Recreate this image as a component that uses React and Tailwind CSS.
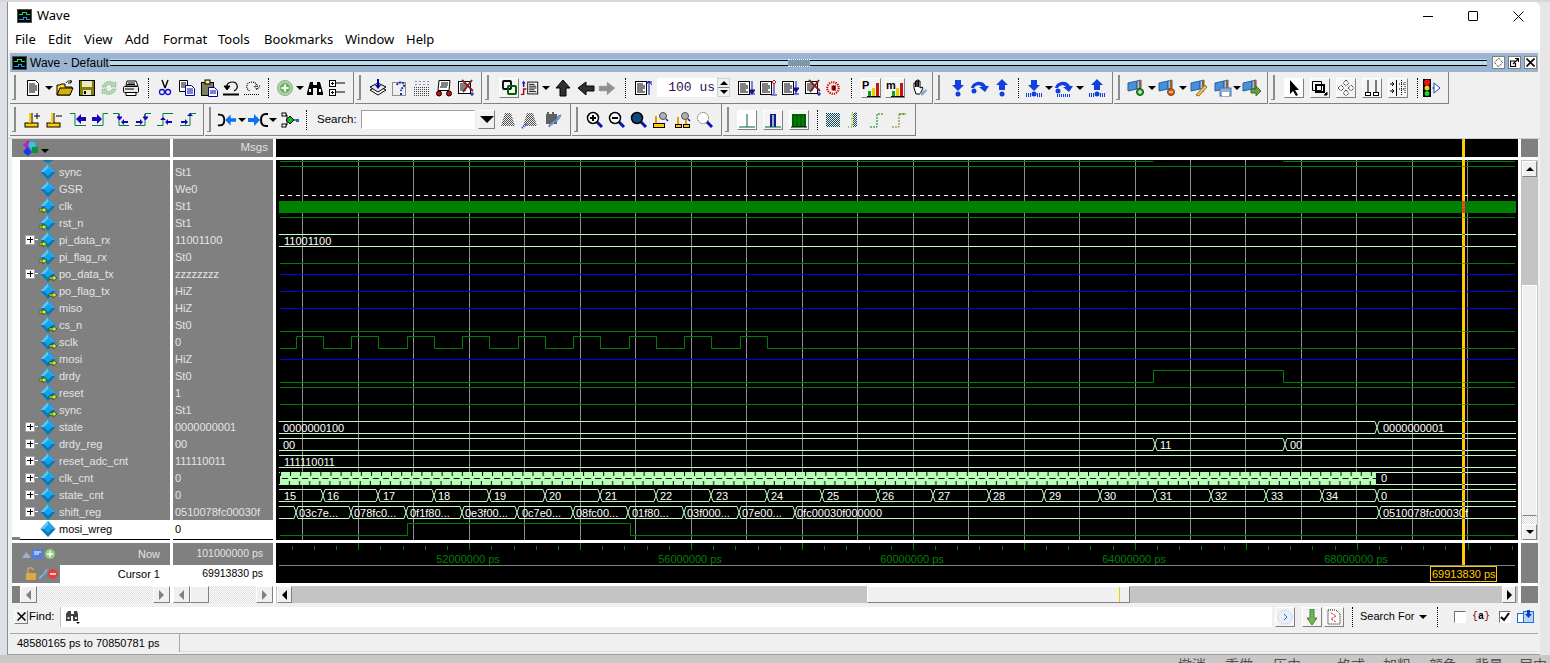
import React from 'react';

// --- small drawing helpers ---
const Svg = ({ w = 18, h = 18, children }) => (
  <svg width={w} height={h} viewBox={`0 0 ${w} ${h}`} className="block">{children}</svg>
);
const K = '#000';

// toolbar cell, keeps the icons on their column
const C = ({ w, children }) => <div className={`${w} h-full flex items-center justify-center shrink-0`}>{children}</div>;
const Caret = () => <div className="w-0 h-0 border-l-[4px] border-r-[4px] border-t-[4px] border-l-transparent border-r-transparent border-t-black" />;
const Sep = () => <div className="h-[20px] border-l border-dotted border-black" />;
const Raised = ({ on, children }) => (
  <div className={`w-[20px] h-[20px] flex items-center justify-center border border-white border-r-[#808080] border-b-[#808080] ${on ? 'bg-white' : 'bg-[#f4f4f4]'}`}>{children}</div>
);

const Group = ({ w, pad, children }) => (
  <div className={`${w} h-full flex items-center ml-px first:ml-0 bg-[#f0f0f0] border-r border-b border-[#808080] shrink-0`}>
    <div className="ml-[2px] w-[4px] h-[25px] border-r-2 border-b border-[#8c8c8c] shrink-0" />
    <div className={`${pad} shrink-0`} />
    {children}
  </div>
);

// --- toolbar icons ---
const Doc = () => <Svg><path d="M3.5 1.5h8l3 3v12h-11z" fill="#fff" stroke={K} /><path d="M5 5h6M5 7h8M5 9h8M5 11h8M5 13h6" stroke={K} /></Svg>;
const Folder = () => <Svg><path d="M1 16V6h3l1-1h4v3h7l-2 8z" fill="#ffd83c" stroke={K} /><path d="M1 16l3-7h13l-3 7z" fill="#d8b000" stroke={K} /><path d="M10 4c1-2 4-3 6-1M15 1v3h-3" fill="none" stroke={K} /></Svg>;
const Save = () => <Svg><rect x="1.5" y="1.5" width="15" height="15" fill="#808000" stroke={K} /><rect x="4" y="2" width="10" height="6" fill="#e8e8c8" /><rect x="5" y="11" width="8" height="5" fill="#e8e8c8" /><rect x="6" y="12" width="2" height="3" fill={K} /></Svg>;
const Sync = () => <Svg><path d="M2 8c1-5 8-7 12-4l2-1v5h-5l1-2c-2-1-5-1-6 2zM16 10c-1 5-8 7-12 4l-2 1v-5h5l-1 2c2 1 5 1 6-2z" fill="#b4d8b4" stroke="#80b480" strokeDasharray="1 1" /></Svg>;
const Print = () => <Svg><path d="M5 2h9l2 5H4z" fill="#fff" stroke={K} /><rect x="1.5" y="7.5" width="15" height="6" rx="1" fill="#e8e8e8" stroke={K} /><path d="M4 13.5h10v3H4z" fill="#fff" stroke={K} /><path d="M6 4h7M5 5.5h8M3 10h9" stroke={K} /></Svg>;
const Cut = () => <Svg><path d="M6 1l3 8M12 1L9 9" stroke={K} strokeWidth="1.4" /><circle cx="6" cy="13" r="2.5" fill="none" stroke="#1010d0" strokeWidth="1.3" /><circle cx="12" cy="13" r="2.5" fill="none" stroke="#1010d0" strokeWidth="1.3" /></Svg>;
const Copy = () => <Svg><path d="M1.5 1.5h8v11h-8z" fill="#fff" stroke={K} /><path d="M3 4h5M3 6h5M3 8h4" stroke={K} /><path d="M7.5 6.5h6l3 3v7h-9z" fill="#fff" stroke="#0000a0" /><path d="M9 10h6M9 12h6M9 14h6" stroke="#0000a0" /></Svg>;
const Paste = () => <Svg><rect x="1.5" y="3.5" width="12" height="13" fill="#808060" stroke={K} /><rect x="5" y="1" width="5" height="4" fill="#ffe080" stroke={K} /><path d="M8.5 8.5h6l3 3v6h-9z" fill="#fff" stroke="#0000a0" /><path d="M10 12h6M10 14h6" stroke="#0000a0" /></Svg>;
const Undo = ({ off }) => (
  <Svg><path d="M5 10V6c2-4 9-4 10 0 1 3-1 5-3 6" fill="none" stroke={K} strokeWidth="1.2" strokeDasharray={off ? '1 1' : undefined} transform={off ? 'matrix(-1 0 0 1 19 0)' : undefined} /><path d="M2 7h6l-3 4z" fill={off ? 'none' : K} stroke={K} strokeDasharray={off ? '1 1' : undefined} transform={off ? 'matrix(-1 0 0 1 19 0)' : undefined} /><path d="M1 15.5h16" stroke={K} strokeWidth={off ? 1 : 2} strokeDasharray={off ? '1 1' : undefined} /></Svg>
);
const AddCircle = () => <Svg><circle cx="9" cy="9" r="7.5" fill="#a8d8a0" stroke="#a0a0a0" /><circle cx="9" cy="9" r="5" fill="#60b860" /><path d="M9 5.5v7M5.5 9h7" stroke="#fff" strokeWidth="2" /></Svg>;
const Binoc = () => <Svg><path d="M4 3h3v3h4V3h3l3 11v2h-6V9H7v7H1v-2z" fill={K} /><rect x="3" y="10" width="2" height="3" fill="#fff" /><rect x="13" y="10" width="2" height="3" fill="#fff" /></Svg>;
const ListBox = () => <Svg><rect x="1.5" y="1.5" width="6" height="6" fill="#fff" stroke={K} /><rect x="1.5" y="10.5" width="6" height="6" fill="#fff" stroke={K} /><path d="M3 4.5h3M4.5 3v3M3 13.5h3M4.5 12v3M8 4h9M8 13h9" stroke={K} /></Svg>;
const Stack = () => <Svg><path d="M1 11l8-4 8 4-8 5z" fill="#fff" stroke={K} /><path d="M1 8l8-4 8 4-8 5z" fill="#e8e8e8" stroke={K} /><path d="M8 0h2v6h2l-3 4-3-4h2z" fill="#0000b0" /></Svg>;
const Question = () => <Svg><rect x="1.5" y="3.5" width="13" height="13" fill="none" stroke="#303030" strokeDasharray="1 1" /><path d="M6 6c1-4 8-3 7 1-1 2-3 2-3 5M10 14v2" fill="none" stroke="#1030b0" strokeWidth="2" strokeDasharray="2 1" /></Svg>;
const Grid = () => <Svg><path d="M1 16.5h16M1 14.5h16M1 12.5h16M1 10.5h16M1 8.5h16" stroke="#404040" strokeDasharray="1 1" /><path d="M3 2v5M7 2v5M11 2v5M15 2v5" stroke="#1030b0" strokeDasharray="1 2" /></Svg>;
const Cart = () => <Svg><path d="M4 1.5h11l-1 10H3z" fill="#fff" stroke={K} /><path d="M6 4h7M6 6h7M5 8h7" stroke={K} /><circle cx="4" cy="14.5" r="2.5" fill="#d01010" stroke={K} /><circle cx="14" cy="14.5" r="2.5" fill="#d01010" stroke={K} /></Svg>;
const XDoc = () => <Svg><rect x="1.5" y="2.5" width="12" height="12" fill="#fff" stroke={K} /><path d="M3 5h6M3 7h7M3 9h7M3 11h6" stroke={K} /><path d="M5 1l11 11M15 1L6 13" stroke="#802020" strokeWidth="1.8" /><path d="M15 13v4M13 15h4" stroke="#0000b0" /></Svg>;
const Chain = () => <svg width="15" height="15" viewBox="0 0 15 15"><rect x="1" y="1" width="8" height="8" rx="1" fill="none" stroke={K} strokeWidth="1.8" /><rect x="6" y="6" width="8" height="8" rx="1" fill="none" stroke="#006000" strokeWidth="2" /></svg>;
const ListIcon = ({ x = 1, children }) => <Svg><rect x={x + 0.5} y="2.5" width="11" height="13" fill="#fff" stroke={K} /><path d={`M${x + 2} 5h6M${x + 2} 7h8M${x + 2} 9h8M${x + 2} 11h6M${x + 2} 13h8`} stroke={K} />{children}</Svg>;
const ListSwap = () => <Svg w={22}><rect x="8.5" y="2.5" width="11" height="13" fill="#fff" stroke={K} /><path d="M10 5h6M10 7h8M10 9h8M10 11h6M10 13h8" stroke={K} /><path d="M4 2v6" stroke="#1010b0" strokeWidth="1.6" /><path d="M2 4l2-3 2 3z" fill="#1010b0" /><path d="M1 16h3v-6h3" fill="none" stroke="#a01010" strokeWidth="1.6" /></Svg>;
const Up = () => <Svg><path d="M9 1l7 8h-4v8H6V9H2z" fill="#303030" stroke={K} /></Svg>;
const Left = () => <Svg><path d="M1 9l8-6v4h8v5H9v4z" fill="#303030" stroke={K} /></Svg>;
const Right = () => <Svg><path d="M17 9L9 3v4H1v5h8v4z" fill="#909090" stroke="#b0b0b0" strokeDasharray="1 1" /></Svg>;
const Hand = () => <Svg><path d="M4 9V4h1.5v4V2H7v6V1h1.500v7V2H10v7l2-1 1 1-3 6H6z" fill="#fff" stroke={K} /><path d="M10 14l6-4 1 2-5 5z" fill="#90a8d0" /></Svg>;
const Bars = ({ letter }) => (
  <svg width="18" height="18" viewBox="0 0 18 18"><text x="0" y="10" fontSize="11" fontWeight="700" fontFamily="Liberation Sans, sans-serif" fill={K}>{letter}</text><rect x="6" y="12" width="3" height="5" fill="#10a010" /><rect x="10" y="9" width="3" height="8" fill="#e8d000" /><rect x="14" y="4" width="3" height="13" fill="#d01010" /><path d="M5 17.500h13" stroke={K} /></svg>
);
const Circ = () => <Svg><circle cx="9" cy="9" r="6.5" fill="none" stroke="#e01010" strokeWidth="2.4" strokeDasharray="1.500 1" /><path d="M12 6.500H8v5h4M7 9h6" stroke="#e01010" strokeWidth="1.5" strokeDasharray="1 1" /></Svg>;

// blue transport arrows
const Dots = ({ y = 16 }) => <path d={`M1 ${y}h1M3 ${y}h1M5 ${y}h1M12 ${y}h1M14 ${y}h1M16 ${y}h1`} stroke="#1040e0" strokeWidth="4" />;
const RunDown = ({ bars }) => <Svg><path d="M6 1h6v5h3l-6 6-6-6h3z" fill="#1040e0" /><circle cx="9" cy="15" r="2.500" fill="#1040e0" />{bars && <Dots />}</Svg>;
const RunUp = ({ bars }) => <Svg><path d="M9 0l6 6h-3v5H6V6H3z" fill="#1040e0" /><circle cx="9" cy="15" r="2.500" fill="#1040e0" />{bars && <Dots />}</Svg>;
const RunOver = ({ bars }) => <Svg w={20}><path d="M1 9c1-7 12-9 15-2h3l-4 6-6-5h3c-2-3-7-2-8 1z" fill="#1040e0" /><circle cx="4" cy="12" r="2.500" fill="#1040e0" />{bars && <path d="M3 16.500h14" stroke="#1040e0" strokeWidth="3" strokeDasharray="1 1" />}</Svg>;

// flag / bookmark icons
const Flag = ({ children }) => <Svg w={20}><path d="M1 4l9-2v8l-9 2z" fill="#4a90d8" stroke="#2060a0" /><path d="M10 2l4-1v8l-4 1z" fill="#a0c8f0" stroke="#2060a0" /><path d="M13 1v12" stroke="#a06020" strokeWidth="2" />{children}</Svg>;

// row 2
const CursorAdd = ({ minus }) => <Svg><rect x="2" y="12" width="13" height="4" fill="#ffcc00" stroke={K} /><path d="M7 2v10" stroke="#ffcc00" strokeWidth="2" /><path d="M9 2v10" stroke={K} /><path d="M11 5h6" stroke={K} />{!minus && <path d="M14 2v6" stroke={K} />}</Svg>;
const P = '#2000c0';
const Edge = ({ d, a }) => <Svg><path d={d} fill="none" stroke="#008040" />{a}</Svg>;
const edges = [
  <Edge d="M1 2.500h5v12h11" a={<path d="M7 8l5-5v3h5v4h-5v3z" fill={P} />} />,
  <Edge d="M1 14.500h11v-12h5" a={<path d="M11 8L6 3v3H1v4h5v3z" fill={P} />} />,
  <Edge d="M1 2.500h6v12h10" a={<><path d="M7 3v3M5 6h5l-2.500 3z" fill={P} stroke={P} /><path d="M9 11l3-3v2h4v2h-4v2z" fill={P} /></>} />,
  <Edge d="M1 14.500h10v-12h6" a={<><path d="M11 3v3M9 6h5l-2.500 3z" fill={P} stroke={P} /><path d="M9 11L6 8v2H2v2h4v2z" fill={P} /></>} />,
  <Edge d="M1 14.500h6v-12h10" a={<><path d="M7 6l-3 3h6z" fill={P} /><path d="M9 11l3-3v2h4v2h-4v2z" fill={P} /></>} />,
  <Edge d="M1 14.500h10v-12h6" a={<><path d="M11 2l-3 3h6z" fill={P} /><path d="M9 11L6 8v2H2v2h4v2z" fill={P} /></>} />,
];
const Merge = ({ out }) => (
  <Svg w={22}>
    <path d={out ? 'M21 3h-2c-4 0-5 3-5 6s1 6 5 6h2' : 'M1 3h2c4 0 5 3 5 6s-1 6-5 6H1'} fill="none" stroke={K} strokeWidth="2" />
    <path d={out ? 'M1 7h6V3l6 6-6 6v-4H1z' : 'M21 7h-6V3L9 9l6 6v-4h6z'} fill="#1070f0" />
  </Svg>
);
const Tree = () => <Svg w={18}><path d="M1 4h5v10H1M6 9h10" fill="none" stroke={K} /><rect x="1" y="2" width="4" height="3" fill="#fff" stroke={K} /><rect x="1" y="13" width="4" height="3" fill="#fff" stroke={K} /><path d="M9 5l4 4-4 4-4-4z" fill="#10c020" stroke={K} /><rect x="15" y="8" width="3" height="3" fill="#2060e0" /></Svg>;
const DithBin = ({ blue }) => <Svg><path d="M6 2h6l4 13H2z" fill="url(#dith)" />{blue && <path d="M1 17l5-4" stroke="#1030e0" strokeDasharray="1 1" strokeWidth="2" />}</Svg>;
const Wrench = () => <Svg><rect x="2" y="3" width="11" height="10" fill="#606060" /><path d="M4 1v2M9 1v2" stroke="#606060" strokeWidth="2" /><path d="M5 16l10-8 2-4-3 1-1 3-8 6z" fill="#90b0e0" stroke="#6080c0" /></Svg>;
const Mag = ({ kind, off }) => {
  const s = off ? '#404040' : K;
  return (
    <Svg>
      <path d="M10 10l6 6" stroke="#1010b0" strokeWidth="3" />
      <circle cx="7" cy="7" r="5.500" fill={kind === 'fill' ? '#104880' : '#fff'} stroke={s} strokeWidth={off ? 1 : 1.500} strokeDasharray={off ? '1 1' : undefined} />
      {kind === 'plus' && <path d="M4 7h6M7 4v6" stroke={K} strokeWidth="2" />}
      {kind === 'minus' && <path d="M4 7h6" stroke={K} strokeWidth="2" />}
    </Svg>
  );
};
const CursorMag = ({ two }) => (
  <Svg>
    {two ? <><rect x="1.500" y="13.500" width="6" height="3" fill="#ffcc00" stroke={K} /><rect x="9.500" y="13.500" width="6" height="3" fill="#ffcc00" stroke={K} /><path d="M4 6v7M12 8v5" stroke="#e0a000" strokeWidth="2" /></> : <><rect x="1.500" y="12.500" width="11" height="4" fill="#ffcc00" stroke={K} /><path d="M4 5v7" stroke="#e0a000" strokeWidth="2" /></>}
    <circle cx="11" cy="5" r="3.500" fill="#b0b0b0" stroke="#505050" />
    <path d="M14 8l2 2" stroke="#1010e0" strokeWidth="1.500" />
  </Svg>
);
const Pulse = ({ kind }) => (
  <svg width="16" height="16" viewBox="0 0 16 16">
    {kind === 0 && <path d="M0 15h16M8 2v13" stroke="#006030" />}
    {kind === 1 && <><rect x="5" y="2" width="6" height="13" fill="#10208a" /><rect x="7" y="3" width="2" height="12" fill="#a0a8e0" /><path d="M0 15h16" stroke="#006030" /></>}
    {kind === 2 && <><rect x="1" y="2" width="14" height="13" fill="#006000" /><path d="M4 4v11M8 4v11M12 4v11" stroke="#00a000" /><path d="M0 15h16" stroke={K} /></>}
  </svg>
);
const DotEdge = ({ kind }) => (
  <Svg>
    {kind === 0 && <rect x="2" y="2" width="14" height="14" fill="url(#dithb)" />}
    {kind === 1 && <><path d="M2 16h4V2h6" fill="none" stroke="#00a000" strokeDasharray="1 2" /><path d="M6 2v14" stroke="#e8d000" strokeDasharray="1 1" /><rect x="7" y="2" width="4" height="14" fill="url(#dithb)" /></>}
    {kind === 2 && <path d="M2 16h7V3h7" fill="none" stroke="#008000" strokeDasharray="2 1" />}
    {kind === 3 && <><path d="M2 16h7V3h7" fill="none" stroke="#808000" strokeDasharray="2 1" /><path d="M9 3h7" stroke="#00a000" strokeDasharray="2 1" /></>}
  </Svg>
);

const Arrow = () => <Svg><path d="M5 1v14l3-3 3 5 2-1-3-5h4z" fill={K} /></Svg>;
const ZoomBox = () => <Svg><path d="M1.500 2.500h9v9h-9z" fill="none" stroke={K} /><rect x="5" y="6" width="8" height="7" fill="none" stroke={K} strokeWidth="2" /><path d="M12 12l4 4M13 16h3v-3" stroke={K} /></Svg>;
const Move = () => <Svg><path d="M9 1l3 3-3 3-3-3zM9 11l3 3-3 3-3-3zM1 9l3-3 3 3-3 3zM11 9l3-3 3 3-3 3z" fill="none" stroke={K} strokeDasharray="1 1" /></Svg>;
const Ruler = () => <Svg><path d="M5 1v13M13 1v13" stroke={K} /><rect x="2.500" y="13.500" width="5" height="3" fill="#fff" stroke={K} /><rect x="10.500" y="13.500" width="5" height="3" fill="#fff" stroke={K} /></Svg>;
const Dotted = () => <Svg><path d="M7.500 1v16M1 5h4M3 3l2 2-2 2M1 12h4M3 10l2 2-2 2" fill="none" stroke={K} /><path d="M12.500 1v16M16 3v12M10 5h6M10 10h6" stroke={K} strokeDasharray="1 1" fill="none" /></Svg>;
const Traffic = () => (
  <Svg w={18}>
    <rect x="0" y="0" width="8" height="18" fill={K} />
    <circle cx="4" cy="3.500" r="3" fill="#f01010" /><circle cx="4" cy="9" r="2.500" fill="#f0d020" /><circle cx="4" cy="14.500" r="2.500" fill="#20d040" />
    <path d="M9 9h2M11 4v10l6-5z" fill="#fff" stroke="#2040a0" />
  </Svg>
);

const AppIcon = () => (
  <svg width="15" height="14" viewBox="0 0 15 14" className="block" shapeRendering="crispEdges">
    <rect x="0" y="0" width="15" height="14" fill="#505050" />
    <rect x="1" y="1" width="13" height="12" fill="#000" />
    <path d="M2 5.500h3V3.500h4v2h4" fill="none" stroke="#10e060" />
    <path d="M2 10.500h4V8.500h3v2h4" fill="none" stroke="#10a0f0" />
  </svg>
);

// --- signal tree ---
const signals = [
  ['sync', 'St1', ''], ['GSR', 'We0', ''], ['clk', 'St1', 'in'], ['rst_n', 'St1', 'in'],
  ['pi_data_rx', '11001100', 'in', 1], ['pi_flag_rx', 'St0', 'in'],
  ['po_data_tx', 'zzzzzzzz', 'out', 1], ['po_flag_tx', 'HiZ', 'out'], ['miso', 'HiZ', 'in'],
  ['cs_n', 'St0', 'out'], ['sclk', '0', 'out'], ['mosi', 'HiZ', 'out'], ['drdy', 'St0', 'in'],
  ['reset', '1', 'out'], ['sync', 'St1', 'out'], ['state', '0000000001', '', 1],
  ['drdy_reg', '00', '', 1], ['reset_adc_cnt', '111110011', '', 1], ['clk_cnt', '0', '', 1],
  ['state_cnt', '0', '', 1], ['shift_reg', '0510078fc00030f', '', 1], ['mosi_wreg', '0', '', 0, 1],
];

const Diamond = ({ dir }) => (
  <svg width="18" height="16" viewBox="0 0 18 16" className="block shrink-0">
    <path d="M9 0l7.500 8L9 16 1.500 8z" fill="#0878b8" />
    <path d="M9 0L1.500 8 9 8z" fill="#58c8f8" />
    <path d="M9 0l7.500 8L9 8z" fill="#28a8e8" />
    <path d="M9 4l4 4-4 4-4-4z" fill="#18a0e8" />
    {dir === 'in' && <path d="M0 11h4V9l4 3-4 3v-2H0z" fill="#c8f020" stroke="#103010" strokeWidth="0.6" />}
    {dir === 'out' && <path d="M10 11h4V9l4 3-4 3v-2h-4z" fill="#c8f020" stroke="#103010" strokeWidth="0.6" />}
  </svg>
);

const SignalName = ({ s }) => {
  const [name, , dir, bus, sel] = s;
  return (
    <div className="h-[17px] flex items-center">
      <div className="w-[8px] h-full shrink-0 bg-white" />
      <div className={`flex-1 h-full flex items-center ${sel ? 'bg-white text-black' : 'bg-[#808080] text-[#e4e4e4]'}`}>
        <div className="w-[15px] flex items-center justify-end shrink-0">
          {bus ? (
            <div className="w-[10px] h-[10px] bg-white border border-[#a0a0b0] flex items-center justify-center relative">
              <div className="w-[6px] h-px bg-black" />
              <div className="absolute w-px h-[6px] bg-black" />
            </div>
          ) : null}
        </div>
        <div className={`w-[3px] h-px shrink-0 ${bus ? 'bg-white' : ''}`} />
        <div className="w-[20px] flex justify-center shrink-0"><Diamond dir={dir} /></div>
        <span className="ml-[1px] pt-px text-[11px] leading-none">{name}</span>
      </div>
    </div>
  );
};

const SignalValue = ({ s }) => (
  <div className={`h-[17px] flex items-center pl-[2px] pt-px text-[11px] leading-none ${s[4] ? 'bg-white text-black' : 'text-[#e4e4e4]'}`}>{s[1]}</div>
);

// --- wave panel, drawn as svg ---
const X0 = 279;
const X1 = 1516;
const gridXs = Array.from({ length: 22 }, (_, i) => Math.round(302.3 + i * 55.48) + 0.5);
const greenLines = [166.5, 217.5, 263.5, 331.5, 387.5, 404.5];
const blueLines = [274.5, 291.5, 308.5, 359.5];

const sclkPath = () => {
  const rises = [296, 351, 407, 462, 518, 573, 629, 684, 740];
  let d = `M${X0 + 1} 348.500`;
  rises.forEach((r) => {
    d += ` H${r}.5 V336.500 H${r + 27}.5 V348.500`;
  });
  return `${d} H${X1 - 1}`;
};

// hexagon-shaped bus segments between the transitions
const busPath = (y, xs) => {
  const top = y + 0.5;
  const bot = y + 12.5;
  const mid = y + 6.5;
  const stops = [X0, ...xs, X1];
  let d = '';
  for (let i = 0; i < stops.length - 1; i++) {
    const a = stops[i];
    const b = stops[i + 1];
    const l = i === 0 ? `M${a} ${top}` : `M${a} ${mid} L${a + 2} ${top}`;
    const l2 = i === 0 ? `M${a} ${bot}` : `M${a} ${mid} L${a + 2} ${bot}`;
    const r = i === stops.length - 2 ? `H${b}` : `H${b - 2} L${b} ${mid}`;
    d += `${l} ${r} ${l2} ${r} `;
  }
  return d;
};

const stateCntXs = Array.from({ length: 20 }, (_, i) => Math.round(322.7 + i * 55.5));
const shiftXs = [296, 351, 406, 462, 517, 573, 628, 684, 739, 795, 1379];
const buses = [
  { y: 234, xs: [], labels: [[284, '11001100']] },
  { y: 421, xs: [1377], labels: [[283, '0000000100'], [1383, '0000000001']] },
  { y: 438, xs: [1155, 1285], labels: [[283, '00'], [1160, '11'], [1290, '00']] },
  { y: 455, xs: [], labels: [[284, '111110011']] },
  {
    y: 489,
    xs: stateCntXs,
    labels: [[284, '15'], ...Array.from({ length: 19 }, (_, i) => [Math.round(327 + i * 55.5), String(16 + i)]), [1381, '0']],
  },
  {
    y: 506,
    xs: shiftXs,
    labels: [
      [299, '03c7e...'], [354, '078fc0...'], [410, '0f1f80...'], [465, '0e3f00...'], [522, '0c7e0...'],
      [576, '08fc00...'], [632, '01f80...'], [687, '03f000...'], [742, '07e00...'], [797, '0fc00030f000000'], [1383, '0510078fc00030f'],
    ],
  },
];
const crossRed = [166, 204, 207, 217, 263, 331, 348, 382, 387, 404];
const crossBlue = [234, 246, 421, 433, 438, 450, 455, 467, 472, 484, 489, 501, 506, 518];

const WaveBody = () => (
  <svg width="1242" height="380" viewBox="276 160 1242 380" className="block bg-black" fontFamily="Liberation Sans, sans-serif" fontSize="11">
    <defs>
      {/* clk_cnt counts too fast to read, the cells repeat every 10px */}
      <pattern id="clkcnt" x="280" y="472" width="10.100" height="13" patternUnits="userSpaceOnUse">
        <rect width="10.100" height="13" fill="#b4ffb4" />
        <path d="M2 6.500h6" stroke={K} />
        <path d="M0.500 0v4M9.500 9v4" stroke={K} />
      </pattern>
    </defs>
    {gridXs.map((x) => <path key={x} d={`M${x} 160V540`} stroke="#8c8c8c" />)}
    <path d={`M${X0 + 1} 161.500H1153.500M1283 161.500H${X1 - 1}`} stroke="#008000" />
    {greenLines.map((y) => <path key={y} d={`M${X0 + 1} ${y}H${X1 - 1}`} stroke="#008000" />)}
    {blueLines.map((y) => <path key={y} d={`M${X0 + 1} ${y}H${X1 - 1}`} stroke="#0000f0" />)}
    <path d={`M${X0 + 1} 195.500H${X1 - 1}`} stroke="#fff" strokeDasharray="4 4" />
    <rect x={X0} y="201" width={X1 - X0} height="12" fill="#008000" />
    <path d={sclkPath()} fill="none" stroke="#008000" />
    <path d={`M${X0 + 1} 382.500H1153.500V370.500H1283.500V382.500H${X1 - 1}`} fill="none" stroke="#008000" />
    <path d={`M${X0 + 1} 535.500H407.500V523.500H630.500V535.500H${X1 - 1}`} fill="none" stroke="#008000" />
    {buses.map((b) => <path key={b.y} d={busPath(b.y, b.xs)} fill="none" stroke="#c0ffc0" />)}
    <path d={`M${X0} 472.500H${X1}M${X0} 484.500H${X1}`} stroke="#c0ffc0" />
    <rect x="280" y="472" width="1096" height="13" fill="url(#clkcnt)" />
    <rect x="1376" y="473" width="60" height="11" fill={K} />
    {gridXs.filter((x) => x > 1376).map((x) => <path key={x} d={`M${x} 473V484`} stroke="#8c8c8c" />)}
    {buses.map((b) => b.labels.map(([x, t]) => <text key={x + t} x={x} y={b.y + 11} fill="#fff">{t}</text>))}
    <text x="1381" y="482" fill="#fff">0</text>
    <rect x="1462" y="160" width="3" height="380" fill="#ffcc00" />
    <rect x="1462" y="201" width="3" height="12" fill="#e84020" />
    {crossRed.map((y) => <rect key={y} x="1462" y={y} width="3" height="1" fill="#e06020" />)}
    {crossBlue.map((y) => <rect key={y} x="1462" y={y} width="3" height="1" fill="#5060d0" />)}
  </svg>
);

const Ruler2 = () => (
  <svg width="1242" height="40" viewBox="276 543 1242 40" className="block bg-black" fontFamily="Liberation Sans, sans-serif" fontSize="11">
    {Array.from({ length: 56 }, (_, i) => {
      const x = Math.round(291.6 + i * 22.19) + 0.5;
      const major = (i - 3) % 5 === 0;
      return <path key={i} d={`M${x} ${major ? 543 : 546}V550`} stroke="#008000" />;
    })}
    {[[468, '52000000 ps'], [690, '56000000 ps'], [912, '60000000 ps'], [1134, '64000000 ps'], [1356, '68000000 ps']].map(([x, t]) => (
      <text key={t} x={x} y="563" fill="#008000" textAnchor="middle">{t}</text>
    ))}
    <path d={`M${X0} 565.500H${X1 - 1}`} stroke="#808080" />
    <rect x="1462" y="543" width="3" height="22" fill="#ffcc00" />
    <rect x="1430.500" y="566.500" width="66" height="15" fill="none" stroke="#ffcc00" />
    <text x="1432" y="578" fill="#ffcc00">69913830 ps</text>
  </svg>
);

const Btn = ({ children, w = 'w-[17px]' }) => (
  <div className={`${w} h-full shrink-0 flex items-center justify-center bg-[#f0f0f0] border border-white border-r-[#808080] border-b-[#808080]`}>{children}</div>
);
const TriL = ({ c = 'border-r-black' }) => <div className={`w-0 h-0 border-y-[5px] border-r-[5px] border-y-transparent ${c}`} />;
const TriR = ({ c = 'border-l-black' }) => <div className={`w-0 h-0 border-y-[5px] border-l-[5px] border-y-transparent ${c}`} />;
const dither = 'bg-[repeating-conic-gradient(#ffffff_0_25%,#dcdcdc_0_50%)] bg-[length:2px_2px]';

const Check = ({ on }) => (
  <div className="w-[12px] h-[12px] bg-white border border-[#707070] border-r-white border-b-white flex items-center justify-center">
    {on && <svg width="10" height="10" viewBox="0 0 10 10"><path d="M1 5l3 3 5-7" fill="none" stroke={K} strokeWidth="2" /></svg>}
  </div>
);

export default function App() {
  return (
    <div className="w-[1550px] h-[663px] overflow-hidden flex flex-col bg-[#e4e4e4] text-black font-['Liberation_Sans',sans-serif]">
      <svg className="absolute w-0 h-0">
        <defs>
          <pattern id="dith" width="2" height="2" patternUnits="userSpaceOnUse"><rect width="1" height="1" fill="#505050" /><rect x="1" y="1" width="1" height="1" fill="#505050" /></pattern>
          <pattern id="dithb" width="2" height="2" patternUnits="userSpaceOnUse"><rect width="1" height="1" fill="#103080" /><rect x="1" y="1" width="1" height="1" fill="#106040" /></pattern>
        </defs>
      </svg>
      <div className="h-[2px] bg-[#d8d8dc] shrink-0" />

      <div className="flex h-[653px] shrink-0">
        <div className="w-[8px] bg-[#dde1e6] border-r border-[#8a8f96] shrink-0" />

        <div className="w-[1532px] h-full bg-[#f0f0f0] flex flex-col rounded-tr-[6px] overflow-hidden shrink-0">
          {/* window title */}
          <div className="h-[28px] bg-white flex items-center shrink-0 font-['Noto_Sans',sans-serif]">
            <div className="ml-[9px]"><AppIcon /></div>
            <span className="ml-[5px] text-[13px]">Wave</span>
            <div className="ml-auto flex items-center mr-[16px] gap-[35px]">
              <div className="w-[10px] h-px bg-black" />
              <div className="w-[10px] h-[10px] border border-black rounded-[1px]" />
              <svg width="11" height="11" viewBox="0 0 11 11"><path d="M0.500 0.500l10 10M10.500 0.500l-10 10" stroke={K} /></svg>
            </div>
          </div>
          {/* menu */}
          <div className="h-[20px] bg-white flex items-center pl-[7px] text-[13px] shrink-0 font-['Noto_Sans',sans-serif]">
            <div className="w-[33px]">File</div>
            <div className="w-[36px]">Edit</div>
            <div className="w-[41px]">View</div>
            <div className="w-[38px]">Add</div>
            <div className="w-[55px]">Format</div>
            <div className="w-[46px]">Tools</div>
            <div className="w-[81px]">Bookmarks</div>
            <div className="w-[61px]">Window</div>
            <div>Help</div>
          </div>
          <div className="h-[3px] shrink-0 bg-[#f0f0f0]" />

          {/* sub window title */}
          <div className="h-[19px] mx-[2px] bg-[#9ab5d1] flex items-center shrink-0">
            <div className="ml-[2px]"><AppIcon /></div>
            <span className="ml-[3px] text-[12px] w-[80px] whitespace-nowrap shrink-0">Wave - Default</span>
            <div className="flex-1 h-[8px] flex items-center">
              <div className="flex-1 h-[7px] border-b border-black bg-[#bcdcec]"><div className="h-[2px] border-b border-black" /></div>
              <div className="w-[22px] h-[8px] bg-[#7f97ad] border-y border-dotted border-white" />
              <div className="flex-1 h-[7px] border-b border-black bg-[#bcdcec]"><div className="h-[2px] border-b border-black" /></div>
            </div>
            <div className="ml-[5px] flex gap-[3px] mr-[1px]">
              <div className="w-[13px] h-[13px] bg-white border border-[#808080] flex items-center justify-center"><svg width="9" height="9" viewBox="0 0 9 9"><path d="M4.500 0l4 4.500-4 4.500-4-4.500z" fill="none" stroke={K} strokeDasharray="1 1" /></svg></div>
              <div className="w-[13px] h-[13px] bg-white border border-[#808080] flex items-center justify-center"><svg width="9" height="9" viewBox="0 0 9 9"><path d="M0 3h5M0.500 3v5.500h5V5M3 6l5-5M5 0.500h3.500V4" fill="none" stroke={K} strokeWidth="1.200" /></svg></div>
              <div className="w-[13px] h-[13px] bg-white border border-[#808080] flex items-center justify-center"><svg width="9" height="9" viewBox="0 0 9 9"><path d="M0.500 0.500l8 8M8.500 0.500l-8 8" stroke={K} strokeWidth="1.600" /></svg></div>
            </div>
          </div>

          {/* toolbar row 1 */}
          <div className="h-[32px] ml-[2px] flex shrink-0">
            <Group w="w-[344px]" pad="w-[6px]">
              <C w="w-[22px]"><Doc /></C><C w="w-[10px]"><Caret /></C><C w="w-[22px]"><Folder /></C><C w="w-[22px]"><Save /></C><C w="w-[22px]"><Sync /></C><C w="w-[22px]"><Print /></C>
              <C w="w-[12px]"><Sep /></C><C w="w-[22px]"><Cut /></C><C w="w-[22px]"><Copy /></C><C w="w-[22px]"><Paste /></C><C w="w-[22px]"><Undo /></C><C w="w-[20px]"><Undo off /></C>
              <C w="w-[12px]"><Sep /></C><C w="w-[22px]"><AddCircle /></C><C w="w-[8px]"><Caret /></C><C w="w-[22px]"><Binoc /></C><C w="w-[22px]"><ListBox /></C>
            </Group>
            <Group w="w-[127px]" pad="w-[6px]">
              <C w="w-[22px]"><Stack /></C><C w="w-[22px]"><Question /></C><C w="w-[22px]"><Grid /></C><C w="w-[22px]"><Cart /></C><C w="w-[22px]"><XDoc /></C>
            </Group>
            <Group w="w-[450px]" pad="w-[9px]">
              <C w="w-[22px]"><Raised><Chain /></Raised></C><C w="w-[20px]"><ListSwap /></C><C w="w-[12px]"><Caret /></C><C w="w-[22px]"><Up /></C><C w="w-[24px]"><Left /></C><C w="w-[18px]"><Right /></C>
              <C w="w-[18px]"><Sep /></C>
              <C w="w-[18px]"><ListIcon><path d="M15 3v13M12 6l3-4 3 4M12 3h6" fill="none" stroke="#1010a0" /></ListIcon></C>
              <div className="w-[5px] shrink-0" />
              <div className="w-[60px] h-[19px] bg-white flex items-center justify-end pr-[2px] shrink-0 text-[13px] font-['Liberation_Mono',monospace] text-[#301050]">100 us</div>
              <div className="w-[13px] h-[19px] flex flex-col shrink-0 border border-[#d0d0d0]">
                <div className="flex-1 flex items-center justify-center"><div className="w-0 h-0 border-x-[4px] border-b-[4px] border-x-transparent border-b-black" /></div>
                <div className="h-px bg-[#808080]" />
                <div className="flex-1 flex items-center justify-center"><Caret /></div>
              </div>
              <div className="w-[5px] shrink-0" />
              <C w="w-[22px]"><ListIcon><path d="M15 2v13M12 15h6M12 11l3 4 3-4z" fill="#1010a0" stroke="#1010a0" /></ListIcon></C>
              <C w="w-[22px]"><ListIcon><path d="M15 5v10M12 16h6" stroke="#1010a0" /><path d="M15 1l2 2-2 2-2-2z" fill="none" stroke="#d01010" /></ListIcon></C>
              <C w="w-[22px]"><ListIcon><path d="M15 2v13M12 15h6M12 9l3 4 3-4z" fill="#1010a0" stroke="#1010a0" /></ListIcon></C>
              <C w="w-[24px]"><XDoc /></C><C w="w-[16px]"><Circ /></C><C w="w-[20px]"><Sep /></C>
              <C w="w-[20px]"><Raised><Bars letter="P" /></Raised></C><C w="w-[28px]"><Raised><Bars letter="m" /></Raised></C><C w="w-[20px]"><Hand /></C>
            </Group>
            <Group w="w-[179px]" pad="w-[7px]">
              <C w="w-[22px]"><RunDown /></C><C w="w-[22px]"><RunOver /></C><C w="w-[22px]"><RunUp /></C><C w="w-[10px]"><Sep /></C>
              <C w="w-[22px]"><RunDown bars /></C><C w="w-[8px]"><Caret /></C><C w="w-[22px]"><RunOver bars /></C><C w="w-[10px]"><Caret /></C><C w="w-[24px]"><RunUp bars /></C>
            </Group>
            <Group w="w-[154px]" pad="w-[6px]">
              <C w="w-[22px]"><Flag><circle cx="13" cy="13" r="3.500" fill="#30a030" stroke="#105010" /><path d="M11 13h4M13 11v4" stroke="#fff" /></Flag></C><C w="w-[8px]"><Caret /></C>
              <C w="w-[24px]"><Flag><circle cx="13" cy="13" r="3.500" fill="#d06010" stroke="#804010" /><path d="M11 13h4" stroke="#fff" /></Flag></C><C w="w-[6px]"><Caret /></C>
              <C w="w-[28px]"><Flag><path d="M6 16l9-10 2 2-8 9z" fill="#e8c060" stroke="#a07020" /></Flag></C>
              <C w="w-[20px]"><Flag><rect x="6" y="9" width="11" height="8" fill="#90b0e0" stroke="#5070a0" /><rect x="8" y="13" width="7" height="4" fill="#fff" /></Flag></C><C w="w-[6px]"><Caret /></C>
              <C w="w-[24px]"><Flag><path d="M9 10h5V7l5 5-5 5v-3H9z" fill="#60a040" stroke="#407020" /></Flag></C>
            </Group>
            <Group w="w-[180px]" pad="w-[6px]">
              <C w="w-[26px]"><Raised on><Arrow /></Raised></C><C w="w-[26px]"><Raised><ZoomBox /></Raised></C><C w="w-[26px]"><Raised><Move /></Raised></C><C w="w-[26px]"><Raised><Ruler /></Raised></C><C w="w-[26px]"><Raised><Dotted /></Raised></C>
              <C w="w-[12px]"><Sep /></C><C w="w-[18px]"><Traffic /></C>
            </Group>
          </div>

          {/* toolbar row 2 */}
          <div className="h-[32px] ml-[2px] flex shrink-0">
            <Group w="w-[194px]" pad="w-[5px]">
              <C w="w-[22px]"><CursorAdd /></C><C w="w-[22px]"><CursorAdd minus /></C>
              <C w="w-[26px]">{edges[0]}</C><C w="w-[18px]">{edges[1]}</C><C w="w-[24px]">{edges[2]}</C><C w="w-[20px]">{edges[3]}</C><C w="w-[24px]">{edges[4]}</C><C w="w-[22px]">{edges[5]}</C>
            </Group>
            <Group w="w-[366px]" pad="w-[6px]">
              <C w="w-[20px]"><Merge /></C><C w="w-[10px]"><Caret /></C><C w="w-[22px]"><Merge out /></C><C w="w-[8px]"><Caret /></C><C w="w-[26px]"><Tree /></C><C w="w-[6px]"><Sep /></C>
              <div className="ml-[8px] w-[44px] text-[11.500px] shrink-0">Search:</div>
              <div className="w-[114px] h-[19px] bg-white border border-[#a0a0a0] border-r-white border-b-white shrink-0" />
              <div className="ml-[3px] w-[17px] h-[19px] bg-[#f0f0f0] border border-white border-r-[#808080] border-b-[#808080] flex items-center justify-center shrink-0">
                <div className="w-0 h-0 border-x-[7px] border-t-[7px] border-x-transparent border-t-black" />
              </div>
              <C w="w-[26px]"><DithBin /></C><C w="w-[18px]"><DithBin blue /></C><C w="w-[28px]"><Wrench /></C>
            </Group>
            <Group w="w-[150px]" pad="w-[6px]">
              <C w="w-[22px]"><Mag kind="plus" /></C><C w="w-[22px]"><Mag kind="minus" /></C><C w="w-[22px]"><Mag kind="fill" /></C><C w="w-[22px]"><CursorMag /></C><C w="w-[22px]"><CursorMag two /></C><C w="w-[22px]"><Mag kind="off" off /></C>
            </Group>
            <Group w="w-[193px]" pad="w-[5px]">
              <C w="w-[26px]"><Raised on><Pulse kind={0} /></Raised></C><C w="w-[26px]"><Raised><Pulse kind={1} /></Raised></C><C w="w-[26px]"><Raised><Pulse kind={2} /></Raised></C>
              <C w="w-[10px]"><Sep /></C><C w="w-[22px]"><DotEdge kind={0} /></C><C w="w-[22px]"><DotEdge kind={1} /></C><C w="w-[22px]"><DotEdge kind={2} /></C><C w="w-[22px]"><DotEdge kind={3} /></C>
            </Group>
          </div>

          <div className="h-[3px] shrink-0 border-b border-[#d0d0d0]" />

          {/* panes */}
          <div className="ml-[4px] w-[1526px] grid grid-cols-[158px_100px_1242px_17px] grid-rows-[18px_380px_40px_17px] gap-x-[3px] gap-y-[3px] bg-white shrink-0 text-[11px]">
            {/* header row */}
            <div className="bg-[#808080] flex items-center pl-[9px]">
              <svg width="18" height="16" viewBox="0 0 18 16"><path d="M7 0l5 5-5 5-5-5z" fill="#c020c0" /><path d="M6 7l5 5-4 4-5-4z" fill="#1040e0" /><circle cx="11" cy="5" r="3.500" fill="#20d0e0" /><rect x="11" y="7" width="6" height="6" fill="#109040" /></svg>
              <div className="ml-[2px] mt-[5px]"><Caret /></div>
            </div>
            <div className="bg-[#808080] flex items-center justify-end pr-[5px] text-[#e0e0e0] text-[11.500px]">Msgs</div>
            <svg width="1242" height="18" viewBox="276 139 1242 18" className="block bg-black"><rect x="1462" y="139" width="3" height="18" fill="#ffcc00" /></svg>
            <div className="bg-[#808080]" />

            {/* signal list */}
            <div className="bg-[#808080] overflow-hidden flex flex-col">
              <div className="h-[3px] flex shrink-0 overflow-hidden bg-[#808080]">
                <div className="w-[8px] bg-white" />
                <div className="ml-[21px]"><svg width="14" height="3" viewBox="0 0 14 3"><path d="M1 0h12L7 3z" fill="#0878b8" /></svg></div>
              </div>
              {signals.map((s, i) => <SignalName key={i} s={s} />)}
              <div className="h-[3px] shrink-0 bg-white border-b border-black ml-[8px]" />
            </div>
            <div className="bg-[#808080] overflow-hidden flex flex-col">
              <div className="h-[3px] shrink-0" />
              {signals.map((s, i) => <SignalValue key={i} s={s} />)}
              <div className="h-[3px] shrink-0 bg-white border-b border-black" />
            </div>
            <WaveBody />
            <div className="flex flex-col bg-[#c4c4c4] px-[1px]">
              <div className="h-[16px] mt-[1px]"><Btn w="w-full"><div className="w-0 h-0 border-x-[4px] border-b-[4px] border-x-transparent border-b-black" /></Btn></div>
              <div className="h-[108px]" />
              <div className="flex-1 bg-[#f0f0f0] border border-white border-b-[#808080]" />
              <div className={`h-[8px] ${dither}`} />
              <div className="h-[16px]"><Btn w="w-full"><Caret /></Btn></div>
            </div>

            {/* now and cursor rows */}
            <div className="flex flex-col">
              <div className="h-[22px] bg-[#808080] flex items-center pl-[9px] pr-[10px] text-[#e4e4e4]">
                <svg width="36" height="12" viewBox="0 0 36 12"><path d="M1 10l4-6 4 4v2z" fill="#a0b0d0" /><rect x="11" y="1" width="11" height="10" fill="#5080d8" /><path d="M13 4h7M13 6h5" stroke="#fff" /><circle cx="29" cy="6" r="5" fill="#90d080" /><path d="M26 6h6M29 3v6" stroke="#fff" strokeWidth="1.500" /></svg>
                <span className="ml-auto">Now</span>
              </div>
              <div className="h-[18px] flex">
                <div className="w-[48px] bg-[#808080] flex items-center justify-end pr-[1px]">
                  <svg width="36" height="14" viewBox="0 0 36 14"><path d="M5 6V3c0-3 5-3 5 0" fill="none" stroke="#d0a060" strokeWidth="1.500" /><rect x="3" y="6" width="10" height="7" fill="#e0a840" /><path d="M17 12l6-6 2-4-3 1-1 3-6 5z" fill="#80b0e8" /><circle cx="30" cy="7" r="5" fill="#e04040" /><path d="M27 7h6" stroke="#fff" strokeWidth="1.500" /></svg>
                </div>
                <div className="flex-1 bg-white flex items-center justify-end pr-[10px] text-black">Cursor 1</div>
              </div>
            </div>
            <div className="flex flex-col text-[10.500px]">
              <div className="h-[22px] bg-[#808080] text-[#e4e4e4] flex items-center justify-end pr-[10px]">101000000 ps</div>
              <div className="h-[18px] bg-white flex items-center justify-end pr-[10px] text-black">69913830 ps</div>
            </div>
            <Ruler2 />
            <div className="bg-[#808080]" />

            {/* scrollbars */}
            <div className="bg-[#808080] flex pl-[8px]">
              <Btn><TriL c="border-r-[#808080]" /></Btn><div className={`flex-1 ${dither}`} /><Btn><TriR c="border-l-[#808080]" /></Btn>
            </div>
            <div className="bg-[#808080] flex">
              <Btn><TriL c="border-r-[#808080]" /></Btn><Btn w="w-[19px]" /><div className={`flex-1 ${dither}`} /><Btn><TriR c="border-l-[#808080]" /></Btn>
            </div>
            <div className="bg-[#c4c4c4] flex">
              <div className="w-px" />
              <Btn w="w-[15px]"><TriL /></Btn>
              <div className="w-[575px]" />
              <div className="w-[263px] bg-[#f0f0f0] border border-white border-b-[#808080] border-r-[#808080] flex justify-end pr-[9px]"><div className="w-px h-full bg-[#e8d000]" /></div>
              <div className="flex-1" />
              <Btn w="w-[14px]"><TriR /></Btn>
              <div className="w-[2px]" />
            </div>
            <div className="bg-[#808080]" />
          </div>

          {/* find bar */}
          <div className="h-[3px] shrink-0" />
          <div className="h-[21px] flex items-center shrink-0 text-[11.500px]">
            <div className="ml-[6px] w-[14px] h-[14px] border border-white border-r-[#808080] border-b-[#808080] flex items-center justify-center">
              <svg width="9" height="9" viewBox="0 0 9 9"><path d="M0.500 0.500l8 8M8.500 0.500l-8 8" stroke={K} strokeWidth="1.500" /></svg>
            </div>
            <span className="ml-[1px] w-[31px]">Find:</span>
            <div className="w-[1212px] h-[20px] bg-white border-l border-[#c0c0c0] flex items-center pl-[4px] shrink-0">
              <svg width="16" height="14" viewBox="0 0 16 14"><path d="M3 1h3v3h3V1h3l1 3v7H8V6H6v5H1V4z" fill="#404040" /><rect x="2.500" y="7" width="2" height="2" fill="#e0e0e0" /><rect x="10" y="7" width="2" height="2" fill="#e0e0e0" /><path d="M11 12h4l-2 2z" fill={K} /></svg>
            </div>
            <div className="ml-[3px]"><Raised><svg width="16" height="16" viewBox="0 0 16 16"><circle cx="8" cy="8" r="7" fill="#e8f0fa" stroke="#b0c0d8" strokeDasharray="1 1" /><path d="M7 5l3 3-3 3" fill="none" stroke="#3070c0" /></svg></Raised></div>
            <div className="ml-[7px]"><Raised><svg width="12" height="16" viewBox="0 0 12 16"><path d="M4 0h4v9h3l-5 7-5-7h3z" fill="#70b850" stroke="#408030" /></svg></Raised></div>
            <div className="ml-[2px]"><Raised><svg width="14" height="16" viewBox="0 0 14 16"><path d="M1 1h8l4 4v10H1z" fill="#fff" stroke={K} strokeDasharray="1 1" /><path d="M4 4l5 3-5 3 5 3" fill="none" stroke="#e01010" strokeDasharray="2 1" /></svg></Raised></div>
            <div className="ml-[8px] h-[20px] border-l border-dotted border-black" />
            <span className="ml-[7px] w-[58px] shrink-0 whitespace-nowrap text-[11px]">Search For</span>
            <div className="ml-[1px] w-0 h-0 border-x-[4px] border-t-[4px] border-x-transparent border-t-black" />
            <div className="ml-[10px] h-[20px] border-l border-dotted border-black" />
            <div className="ml-[16px]"><Check /></div>
            <span className="ml-[6px] w-[27px] text-[10px] font-['Liberation_Mono',monospace] text-[#800000]">{'{'}<span className="text-black font-bold">a</span>{'}'}</span>
            <Check on />
            <div className="ml-[6px]">
              <svg width="17" height="13" viewBox="0 0 17 13"><rect x="0.500" y="3.500" width="6" height="9" fill="#fff" stroke="#2070d0" /><rect x="6.500" y="1.500" width="10" height="11" fill="#b8d8f8" stroke="#2070d0" /><path d="M10 0h3v4h2l-3.500 4L8 4h2z" fill="#1040c0" /></svg>
            </div>
          </div>

          {/* status bar */}
          <div className="h-[6px] shrink-0" />
          <div className="h-[19px] flex shrink-0 mx-[2px] border-t border-[#a8a8a8] text-[11px]">
            <div className="w-[170px] pl-[7px] pt-px flex items-center border-r border-[#a8a8a8]">48580165 ps to 70850781 ps</div>
            <div className="flex-1 border-b border-[#e0e0e0]" />
          </div>
          <div className="flex-1 border-b border-[#a0a0a0]" />
        </div>

        <div className="w-[10px] bg-[#e6e6e6] shrink-0" />
      </div>

      {/* the editor behind the window */}
      <div className="h-[8px] bg-[#c8c8c8] overflow-hidden flex pl-[1178px] text-[14px] leading-[18px] text-[#505050] font-['Noto_Sans_CJK_SC',sans-serif] shrink-0">
        <div className="w-[47px] shrink-0">撤消</div>
        <div className="w-[48px] shrink-0">重做</div>
        <div className="w-[64px] shrink-0">历史</div>
        <div className="w-[46px] shrink-0">格式</div>
        <div className="w-[46px] shrink-0">加粗</div>
        <div className="w-[46px] shrink-0">颜色</div>
        <div className="w-[44px] shrink-0">背景</div>
        <div className="shrink-0">居中</div>
      </div>
    </div>
  );
}
